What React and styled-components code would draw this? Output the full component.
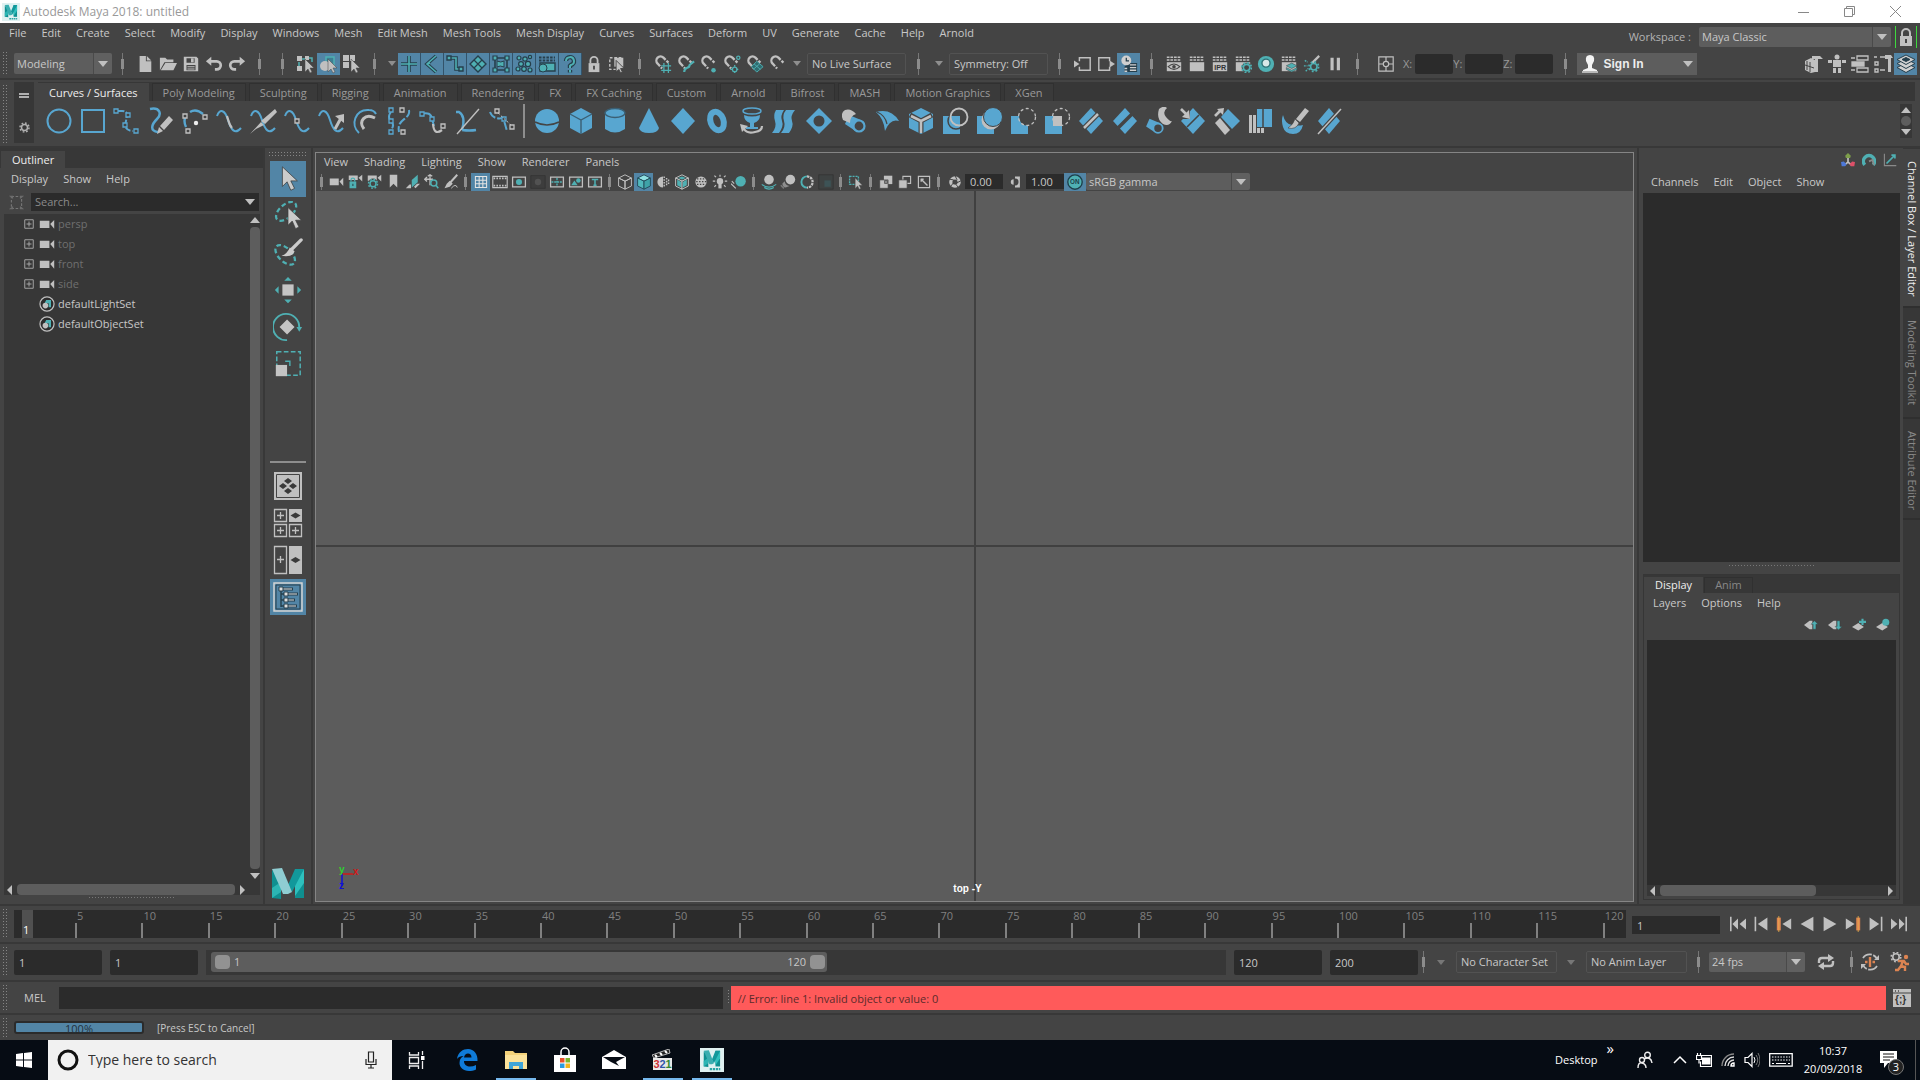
import React, { useState } from 'react'
import styled, { createGlobalStyle, css } from 'styled-components'

const G = '#c0c0c0'
const T = '#4fb0b3'
const B = '#58a6d0'
const D = '#263f4c'
const O = '#dd8452'

// small icons, 20 x 20 grid
const cursor = <path d="M9 5v13l3-3 2 4 2-1-2-4h4z" fill={G} stroke="#444" strokeWidth=".5" />
const magnet = <path d="M9 15L4 9.500a4.500 4.500 0 0 1 6.500-6.500L16 8.500" fill="none" stroke={G} strokeWidth="2.6" strokeDasharray="2 1.4 21.5 1.4 3" />
const clap = (
  <>
    <path d="M2 2.500h16M2 5.500h16" stroke={G} strokeWidth="1.6" strokeDasharray="3 1" />
    <path d="M2 8h16v10H2z" fill={G} />
  </>
)
const frame = <path d="M2 4h16v12H2z" fill="none" stroke={G} strokeWidth="1.6" />
const cube = (line, top, left, right) => (
  <g stroke={line} strokeWidth="1.2" strokeLinejoin="round">
    <path d="M10 1l8 4-8 4-8-4z" fill={top} />
    <path d="M2 5l8 4v10l-8-4z" fill={left} />
    <path d="M18 5l-8 4v10l8-4z" fill={right} />
  </g>
)
const gear = (c) => <g fill="none" stroke={c}><circle cx="10" cy="10" r="4" strokeWidth="2" /><circle cx="10" cy="10" r="6" strokeWidth="2" strokeDasharray="2.3 2.4" /></g>
const tag = <path d="M0 10l8-6h4v12H8z" fill={G} />

// selection mask icons are teal lines over a dark outline
const twoTone = (d) => (
  <>
    <path d={d} fill="none" stroke={D} strokeWidth="3.6" />
    <path d={d} fill="none" stroke={T} strokeWidth="1.6" />
  </>
)

const icons = {
  newFile: <path d="M4 1h7v6h6v12H4zM12 1l5 5h-5z" fill={G} />,
  open: <path d="M1 17V3h6l2 2h7v3H6zM7 9h13l-4 8H2z" fill={G} />,
  save: <path fillRule="evenodd" d="M2 2h14l2 2v14H2zM5 3.500v5h9v-5zM5 11v6h10v-6zM10 4h3v4h-3zM6 12.500h8v1H6zM6 15h8v1H6z" fill={G} />,
  undo: <path d="M1 7l6-5v3.500h6a5 5 0 0 1 0 12h-2v-3h2a2.500 2.500 0 0 0 0-6H7V12z" fill={G} />,
  redo: <path d="M19 7l-6-5v3.500H7a5 5 0 0 0 0 12h2v-3H7a2.500 2.500 0 0 1 0-6h6V12z" fill={G} />,
  selHier: <><path d="M1 2h5v5H1zM1 12h5v5H1zM9 2h4v4H9z" fill={G} /><path d="M3 8v4M6 5h3M13 4h3v4" stroke={T} fill="none" strokeWidth="1.5" />{cursor}</>,
  selObj: <><path d="M7 3h8v9H7z" fill="#3d7f93" stroke={T} strokeWidth="1.5" /><circle cx="6" cy="12" r="5" fill={G} />{cursor}</>,
  selComp: <><path d="M1 1h6v6H1zM8 1h5v6H8zM1 8h6v6H1z" fill={G} />{cursor}</>,
  mHandle: twoTone('M10 2v16M2 10h16'),
  mJoint: twoTone('M14 2L5 10l9 8M5 10l3-1'),
  mCurve: <>{twoTone('M4 4h7v11h5')}<path d="M2 2h4v4H2zM14 13h4v4h-4z" fill={T} stroke={D} strokeWidth="1.4" /></>,
  mSurf: <><path d="M10 2l8 8-8 8-8-8z" fill={T} stroke={D} strokeWidth="1.4" /><path d="M6 6l8 8M14 6l-8 8" stroke={D} strokeWidth="1.2" /></>,
  mDeform: <><path d="M4 4h12v12H4z" fill="none" stroke={D} strokeWidth="1.6" /><path d="M6 7q4 2 7 0v6q-4-2-7 0z" fill={T} stroke={D} /><path d="M2 2h4v4H2zM14 2h4v4h-4zM2 14h4v4H2zM14 14h4v4h-4z" fill={T} stroke={D} strokeWidth="1.2" /></>,
  mDyn: <g fill={T} stroke={D} strokeWidth="1.2"><circle cx="5" cy="4" r="2" /><circle cx="11" cy="5" r="2.2" /><circle cx="16" cy="3" r="1.6" /><circle cx="7" cy="10" r="2.4" /><circle cx="14" cy="10" r="2.6" /><circle cx="4" cy="15" r="2" /><circle cx="10" cy="15" r="2.3" /><circle cx="16" cy="16" r="2" /></g>,
  mRend: <><path d="M3 9h15v8H3z" fill={T} stroke={D} strokeWidth="1.4" /><path d="M2 3.500h16M2 6.500h16" stroke={D} strokeWidth="2" strokeDasharray="2.5 1.2" /><circle cx="6" cy="14" r="4" fill={T} stroke={D} /></>,
  mMisc: <><path d="M6 7a4 4 0 1 1 5 4l-1 1v2M10 16v2.500" fill="none" stroke={D} strokeWidth="4.4" /><path d="M6 7a4 4 0 1 1 5 4l-1 1v2M10 16v2.500" fill="none" stroke={T} strokeWidth="2" /></>,
  lock: <><path d="M6 9V6a4 4 0 0 1 8 0v3" fill="none" stroke={G} strokeWidth="2" /><path d="M4 9h12v10H4z" fill={G} /><path d="M10 12v4" stroke="#444" strokeWidth="2" /></>,
  selBox: <><path d="M2 3h12v13H2z" fill="none" stroke={G} strokeWidth="1.6" strokeDasharray="3 2" /><path d="M7 3h10v10H7z" fill={G} /><path d="M9 6v13l3-3 2 4 2-1-2-4h4z" fill={G} stroke="#444" strokeWidth="1" /></>,
  magGrid: <>{magnet}<path d="M11 9v11M16 9v11M8 12h11M8 17h11" stroke={T} strokeWidth="1.4" /></>,
  magCurve: <>{magnet}<path d="M8 19c0-7 6-3 6-8l5-4" fill="none" stroke={T} strokeWidth="2.4" /></>,
  magPoint: <>{magnet}<circle cx="15" cy="17" r="2.5" fill={T} /></>,
  magCenter: <>{magnet}<g fill="none" stroke={T} strokeWidth="1.4"><circle cx="17" cy="3" r="1.8" /><circle cx="13" cy="16" r="2.5" /><path d="M13 11v9M8 16h10" strokeDasharray="2 5" /></g></>,
  magPlane: <>{magnet}<path d="M12 7l7 6-7 6-6-6z" fill="#2f6c70" stroke={T} /><path d="M9 10l7 6M15 10l-7 6" stroke={T} /></>,
  magLive: magnet,
  inputs: <><path d="M6 7V3h12v14H6v-4" fill="none" stroke={G} strokeWidth="1.6" /><path d="M0 6v8l6-4z" fill={G} /></>,
  outputs: <><path d="M14 7V3H2v14h12v-4" fill="none" stroke={G} strokeWidth="1.6" /><path d="M14 6v8l6-4z" fill={G} /></>,
  history: <><path d="M9 9h10v10H5v-6" fill={D} /><path d="M11 11h7M11 14h7M5 15h3M5 18h3M11 17h7" stroke="#d0d0d0" strokeWidth="1.6" /><circle cx="7" cy="6" r="5.5" fill="#d0d0d0" /><path d="M7 3v3.500h3" stroke={D} strokeWidth="1.4" fill="none" /></>,
  renView: <>{clap}<path d="M3.500 13q6.500-6 13 0q-6.500 6-13 0z" fill="none" stroke="#444" strokeWidth="1.2" /><circle cx="10" cy="13" r="2" fill="#444" /></>,
  render: clap,
  ipr: <>{clap}<text x="3.5" y="16.5" fontSize="8" fontWeight="bold" fontFamily="Liberation Sans, sans-serif" fill="#333">IPR</text></>,
  renSet: <>{clap}<circle cx="14" cy="14" r="5.5" fill="#444" /><g transform="translate(5 5) scale(.9)">{gear(T)}</g></>,
  shader: <><circle cx="10" cy="10" r="9" fill={T} /><circle cx="10" cy="9" r="4.5" fill="#d8e8e8" stroke="#2c7074" strokeWidth="1.5" /></>,
  renLayer: <>{clap}<path d="M13 9l6 3-6 3-6-3zM7 14l6 3 6-3v2l-6 3-6-3z" fill={T} stroke="#444" strokeWidth=".6" /></>,
  lightEd: <><path d="M2 6l3 2M1 12h4M3 18l3-3" stroke={T} strokeWidth="1.5" strokeDasharray="2 1" /><path d="M18 1l-8 8" stroke={G} strokeWidth="2.5" /><g transform="translate(3 4) scale(.9)">{gear(T)}</g></>,
  pause: <path d="M5 3h3.500v14H5zM12 3h3.500v14H12z" fill={G} />,
  absMode: <g fill="none" stroke={G} strokeWidth="1.3"><path d="M2 2h16v16H2zM10 2v5M10 13v5M2 10h5M13 10h5" /><circle cx="10" cy="10" r="3" /></g>,
  build: <><path d="M1 7l6-3 4 2v12l-4 1-6-3z" fill={G} /><path d="M3 7v9M6 8v10M1 11l9 3" stroke="#444" /><path d="M8 2h8l3 3h-5v13h-3V5H8z" fill={G} /></>,
  rig: <g fill={G}><circle cx="10" cy="3" r="2.5" /><path d="M1 6h4v3H1zM15 6h4v3h-4zM6 6h8v7H6zM6 14h3v5H6zM11 14h3v5h-3z" /></g>,
  attrEd: <g fill="none" stroke={G} strokeWidth="1.3"><path d="M7 2h11v4H7zM7 14h11v4H7zM1 4h4M1 16h4" /><path d="M2 8h12v4H2z" fill={G} /></g>,
  toolSet: <g fill="none" stroke={G} strokeWidth="1.4"><path d="M1 3h3M7 3h5M2 8h3v3H2zM2 15h3v3H2zM7 16h5" /><path d="M12 1h6l2 3h-2v14h-3V5h-3z" fill={G} stroke="none" /></g>,
  layers: <g fill="#d0d0d0" stroke={D} strokeWidth="1"><path d="M10 9l9 4.500-9 5-9-5z" /><path d="M10 5l9 4.500-9 5-9-5z" /><path d="M10 1l9 4.500-9 5-9-5z" /><path d="M10 3.500l4 2-4 2-4-2z" fill={D} /></g>,
  // viewport panel bar
  cam: <path d="M1 6h12v9H1zM14 10l5-5v11z" fill={G} />,
  camLock: <><path d="M1 2h12v6H1zM14 5l5-4v9z" fill={G} /><path d="M2 10h9v9H2z" fill={T} /><path d="M4 10V8a2.500 2.500 0 0 1 5 0v2" fill="none" stroke={T} strokeWidth="1.6" /><path d="M6.500 13v3" stroke="#2d4d50" strokeWidth="1.5" /></>,
  camGear: <><path d="M1 2h12v7H1zM14 5l5-4v9z" fill={G} /><circle cx="8" cy="12" r="6" fill="#444" /><g transform="translate(-2 3)">{gear(T)}</g></>,
  bookmark: <path d="M5 1h10v17l-5-5-5 5z" fill={G} />,
  imgPlane: <><path d="M9 8l8-7v10l-8 7z" fill={T} /><path d="M1 19l5-5h2v5zM12 17l4-4h4l-6 6z" fill={G} /></>,
  pan2d: <><path d="M8 1v14M1 7h11M5 3l3-2 3 2M4 4L1 7l3 3" fill="none" stroke={G} strokeWidth="1.7" /><circle cx="13" cy="12" r="4" fill="#444" stroke={T} strokeWidth="2" /><path d="M16 15l3 4" stroke={T} strokeWidth="2" /></>,
  grease: <><path d="M19 1l-9 10" stroke={G} strokeWidth="2.6" /><path d="M9 9l4 4-4 4-7 2 3-6z" fill={G} /><path d="M11 19q6-7 8-1" stroke={G} fill="none" strokeWidth="1.3" /></>,
  grid: <path d="M3 3h14v14H3zM7.700 3v14M12.300 3v14M3 7.700h14M3 12.300h14" fill="none" stroke="#e4e4e4" strokeWidth="1.3" />,
  film: <><path d="M1 3h18v14H1z" fill="none" stroke={G} strokeWidth="1.4" /><path d="M2 5.500h16M2 14.500h16" stroke={G} strokeWidth="2" strokeDasharray="2 1.5" /></>,
  resGate: <>{frame}<circle cx="10" cy="10" r="3.8" fill={T} /></>,
  gateMask: <><path d="M1 2h18v16H1z" fill="#3d3d3d" stroke="#343434" /><circle cx="10" cy="10" r="4" fill="#525252" /></>,
  fieldChart: <>{frame}<path d="M10 5v10M3 10h14" stroke={T} strokeWidth="1.7" strokeDasharray="2.5 1" /></>,
  safeAct: <>{frame}<path d="M4 14l4-6 4 6z" fill={T} /><circle cx="13" cy="8" r="2.8" fill={T} /></>,
  safeTitle: <>{frame}<path d="M6 7h8M10 6.500v7.500M8 14h4" stroke={T} strokeWidth="1.9" /></>,
  wire: cube(G, 'none', 'none', 'none'),
  shaded: cube('#244c5c', '#8fe0e2', '#52b9bd', '#3fa3a8'),
  halfShade: <><path d="M10 3a7 7 0 0 0 0 14z" fill={G} /><path d="M11.500 3v14M14.500 5v10M17 7v6" stroke={G} strokeWidth="1.8" strokeDasharray="2 1.5" /></>,
  texCube: <>{cube(G, '#444', '#444', '#444')}<path d="M4 7l5 3v7l-5-3zM11 10l5-3v7l-5 3zM10 3l5 2-5 2-5-2z" fill={T} /></>,
  texture: <><circle cx="10" cy="10" r="7" fill={G} /><path d="M5 6h11M4 9.500h13M5 13h11" stroke="#444" strokeWidth="1.5" strokeDasharray="1.8 1.8" /></>,
  lights: <><circle cx="10" cy="9" r="4" fill={G} /><path d="M8 12h4v6H8z" fill={G} /><path d="M10 1v2.500M1 9h3M16 9h3M3 2l2 2M17 2l-2 2M3 16l2-2M17 16l-2-2" stroke={G} strokeWidth="1.5" /></>,
  shadows: <><circle cx="12" cy="9" r="6.5" fill={T} /><path d="M0 12l6 6M1 9l3 3" stroke={G} strokeWidth="1.4" /></>,
  ao: <><circle cx="10" cy="7" r="6" fill={G} /><path d="M1 13q9 7 18 0M4 17q6 4 12 0" stroke={T} fill="none" strokeWidth="1.5" /></>,
  blur: <><circle cx="13" cy="7" r="6" fill={G} /><path d="M6 9a6 6 0 0 0 6 6l-5 2a5 5 0 0 1-4-5z" fill="#8d8d8d" /><path d="M1 14l4 4" stroke="#777" strokeWidth="2" /></>,
  aa: <><path d="M10 3a7 7 0 0 0 0 14" fill="none" stroke={T} strokeWidth="2.4" /><path d="M10 3a7 7 0 0 1 0 14" fill="none" stroke={G} strokeWidth="2.8" strokeDasharray="3 1" /></>,
  dof: <><path d="M1 1h18v18H1z" fill="#3e4242" stroke="#343434" /><path d="M8 8h8v8H8z" fill="#3d5356" /></>,
  isolate: <><path d="M2 3h11v10H2z" fill="none" stroke={T} strokeWidth="1.7" strokeDasharray="2.5 1.2" />{cursor}</>,
  xray: <><path d="M7 1h12v12H7z" fill={G} /><path d="M1 7h12v12H1z" fill={G} stroke="#444" /><path d="M7.500 7.500h5v5h-5z" fill="#444" /><path d="M9 9h2v2H9z" fill={G} /></>,
  xrayAct: <><path d="M7 2h11v10H7z" fill="none" stroke={G} strokeWidth="1.6" /><path d="M1 7h12v12H1z" fill={G} stroke="#444" /></>,
  xrayJoint: <><path d="M2 2h16v16H2z" fill="none" stroke={G} strokeWidth="1.7" /><path d="M6 6l9 9M5.500 6h4M6 5.500v4" stroke={G} strokeWidth="2" /></>,
  exposure: <><circle cx="10" cy="10" r="6" fill="none" stroke={G} strokeWidth="4.6" /><path d="M10 1l3 6M19 8l-6 3M15 18l-4-5M4 16l4-5M2 6l6 1" stroke="#444" strokeWidth="1.4" /></>,
  gamma: <><path d="M10 2h7v16h-7v-3a5 5 0 0 0 0-10z" fill={G} /><path d="M8 6a4 4 0 0 0 0 8z" fill={G} /></>,
  cmOn: <><circle cx="10" cy="10" r="8" fill={T} stroke="#1d3f4a" strokeWidth="1.5" /><text x="4.5" y="12.5" fontSize="7" fontWeight="bold" fontFamily="Liberation Sans, sans-serif" fill="#1d3f4a">ON</text></>,
  // outliner
  plus: <path d="M1.500 1.500h17v17h-17zM10 5v10M5 10h10" fill="none" stroke="#a8a8a8" strokeWidth="1.9" />,
  set: <><circle cx="10" cy="10" r="8.8" fill="#2d2d2d" stroke={G} strokeWidth="1.5" /><path d="M9 5h6v9h-3V9H7z" fill={T} /><circle cx="8" cy="12" r="3.5" fill={G} /></>,
  filter: <><path d="M4 3h12v14H4z" fill="none" stroke="#777" strokeWidth="1.3" strokeDasharray="3 2" /><path d="M1 2h5v4zM19 2h-5v4zM1 18h5v-4zM19 18h-5v-4z" fill="#6c6c6c" /></>,
  // channel box
  manip: <><path d="M10 6v7l-5 4M10 13l5 4" stroke={G} strokeWidth="2.4" fill="none" /><path d="M10 0l4 4-1 3H7L6 4z" fill="#7d9e4a" /><path d="M0 13l4-1 4 4-2 3H1z" fill="#4d78d8" /><path d="M20 13l-4-1-4 4 2 3h5z" fill="#dd5068" /></>,
  speed: <><path d="M4 17a8 8 0 1 1 12 0" fill="none" stroke={T} strokeWidth="5" /><path d="M10 12l5-2 2 7" fill="none" stroke="#8a8a8a" strokeWidth="2.5" /></>,
  hyper: <><path d="M2 1v17h17" stroke="#8a8a8a" strokeWidth="1.6" fill="none" /><path d="M5 15L17 3M12 3h5v5" stroke={T} strokeWidth="2.4" fill="none" /></>,
  layUp: <>{tag}<path d="M15 4l5 5h-3v7h-4V9h-3z" fill={T} stroke="#333" strokeWidth=".5" /></>,
  layDown: <>{tag}<path d="M15 17l5-5h-3V4h-4v8h-3z" fill={T} stroke="#333" strokeWidth=".5" /></>,
  layNew: <><path d="M0 13l9-6 8 6-8 5z" fill={G} /><path d="M15 1v9M10 5.500h10" stroke={T} strokeWidth="3" /></>,
  laySel: <><path d="M0 13l9-6 8 6-8 5z" fill={G} /><circle cx="14" cy="6" r="5" fill={T} /></>,
  // playback
  toStart: <path d="M0 1h2v18H0zM10 3v14l-7-7zM20 3v14l-8-7z" fill={G} />,
  stepBack: <path d="M2 1h2v18H2zM18 2v16L6 10z" fill={G} />,
  keyBack: <><path d="M1 2h5v16H1z" fill={O} /><path d="M3.500 0v20" stroke="#e8b04a" strokeWidth="1" /><path d="M19 3v14L8 10z" fill={G} /></>,
  playBack: <path d="M18 1v18L2 10z" fill={G} />,
  play: <path d="M2 1v18l16-9z" fill={G} />,
  keyFwd: <><path d="M14 2h5v16h-5z" fill={O} /><path d="M16.500 0v20" stroke="#e8b04a" strokeWidth="1" /><path d="M1 3v14l11-7z" fill={G} /></>,
  stepFwd: <path d="M16 1h2v18h-2zM2 2v16l12-8z" fill={G} />,
  toEnd: <path d="M18 1h2v18h-2zM10 3v14l7-7zM0 3v14l8-7z" fill={G} />,
  loop: <><path d="M3 11V9q0-3 3-3h7M17 9v2q0 3-3 3H7" fill="none" stroke={G} strokeWidth="2.4" /><path d="M12 2l6 4-6 4zM8 10l-6 4 6 4z" fill={G} /></>,
  autoKey: <><path d="M3 6a8 8 0 0 1 14 1M17 14a8 8 0 0 1-14-1" fill="none" stroke={G} strokeWidth="1.8" strokeDasharray="10 1.5" /><path d="M19 3v5h-5zM1 17v-5h5z" fill={G} /><path d="M10 5v10M5 10h2.500M12.500 10H15" stroke={O} strokeWidth="2.4" /></>,
  runner: <><g transform="translate(-2 -3) scale(.8)">{gear(G)}</g><circle cx="16" cy="5" r="2.2" fill={O} /><path d="M8 9h6l2 3h3M13 9l-2 5 4 1v4M11 14l-3 4H5" stroke={O} strokeWidth="2.4" fill="none" /></>,
  script: <><path d="M1 1h18v18H1z" fill={G} /><path d="M1 5h18" stroke="#444" /><path d="M3 3h1M6 3h1" stroke="#444" strokeWidth="1.5" /><text x="3" y="15" fontSize="10" fontWeight="bold" fontFamily="Liberation Sans, sans-serif" fill="#333">{'{;}'}</text></>,
  shelfGear: gear('#b0b0b0'),
}

// shelf icons, 28 x 28 grid
const wave = 'M2 9C5 1 10 3 13 13s7 15 13 8'
const line = { fill: 'none', stroke: B, strokeWidth: 2 }
const gline = { fill: 'none', stroke: G, strokeWidth: 2.2 }
const square = (x, y, c = G) => <path key={x + '-' + y} d={`M${x - 2} ${y - 2}h4v4h-4z`} fill="#444" stroke={c} strokeWidth="1.3" />
const tube = <g><path d="M10 8l12 5-4 12-12-8z" fill={B} /><circle cx="20" cy="19" r="5.5" fill="#444" stroke={B} strokeWidth="2.2" /></g>
const patch = <path d="M14 1l12 13-12 13L2 14z" fill={B} />

const shelfA = [
  ['NURBS Circle', <circle cx="14" cy="14" r="11.5" {...line} />],
  ['NURBS Square', <path d="M3 3h22v22H3z" {...line} />],
  ['CV Curve', <><path d="M5 4h4q6 0 5 5l-2 10q2 5 8 5" {...line} strokeDasharray="6 2" />{square(3, 4, B)}{square(15, 8, B)}{square(12, 18, B)}{square(23, 24, B)}</>],
  ['Pencil Curve', <><path d="M3 2c10-2 12 5 7 10s-8 12 1 13" {...line} strokeWidth="2.5" /><path d="M22 9l4 4-9 10-4-4zM12 20l4 4-6 3z" fill={G} /></>],
  ['Three Point Arc', <><path d="M5 20q-3-6 0-12M9 5q6-4 13 2" {...line} strokeWidth="2.4" />{square(4, 9)}{square(24, 10)}{square(7, 24)}<circle cx="15" cy="16" r="2.2" fill="#eee" /></>],
  ['Attach Curves', <><path d={wave} {...line} /><path d="M12 9c2 6 2 9 5 12" {...gline} /></>],
  ['Detach Curves', <><path d={wave} {...line} /><path d="M26 2l2 3-12 12-4-3zM12 15l3 3-8 4-6 5z" fill={G} /></>],
  ['Insert Knot', <><path d={wave} {...line} />{square(14, 14)}</>],
  ['Extend Curve', <><path d={wave} {...line} /><path d="M18 22l6-11" {...gline} strokeWidth="3" /><path d="M18 9l9-2v9z" fill={G} /></>],
  ['Offset Curve', <><path d="M8 26C-1 18 4 2 18 3q5 0 7 4" {...line} /><path d="M13 22c-6-8 1-16 11-11" {...gline} strokeWidth="3" /></>],
  ['Rebuild Curve', <><path d="M6 5q-4 5 0 9t0 9M24 3c2 10-13 8-10 22" {...line} strokeDasharray="8 2" />{square(6, 3, B)}{square(6, 14, B)}{square(6, 25, B)}{square(17, 3)}{square(18, 25)}</>],
  ['Add Points', <><path d="M2 7q10-3 11 5l2 7" {...line} /><path d="M14 17q1 12 9 6" {...gline} />{square(3, 7, B)}{square(13, 12, B)}{square(24, 19)}</>],
  ['Curve Fillet', <><path d="M3 5h3q7 4 3 18M9 23q8 1 14 0" {...line} strokeWidth="2.4" /><path d="M26 2L4 27" stroke={G} strokeWidth="1.4" /></>],
  ['Edit Curve', <><path d="M3 5q3 8 13 6l2 6 2 7" {...line} strokeDasharray="8 2" />{square(10, 4)}{square(17, 12, B)}{square(25, 20)}<path d="M11 6l13 12" stroke={G} strokeDasharray="2 2" /></>],
]
const shelfB = [
  ['NURBS Sphere', <><circle cx="14" cy="14" r="12" fill={B} /><path d="M2 15q12 6 24 0" stroke="#444" fill="none" strokeWidth="1.5" /></>],
  ['NURBS Cube', <><path d="M14 1l11 6v14l-11 6-11-6V7z" fill={B} /><path d="M3 7l11 6 11-6M14 13v14" stroke="#3b5f73" strokeWidth="1.4" fill="none" /></>],
  ['NURBS Cylinder', <><path d="M4 6v16q10 7 20 0V6z" fill={B} /><ellipse cx="14" cy="6" rx="10" ry="4.5" fill={B} stroke="#3b5f73" strokeWidth="1.4" /></>],
  ['NURBS Cone', <path d="M14 1l10 20q-1 5-10 5T4 21z" fill={B} />],
  ['NURBS Plane', <path d="M14 1l12 13-12 13L2 14z" fill={B} />],
  ['NURBS Torus', <ellipse cx="14" cy="14" rx="6.5" ry="9.5" transform="rotate(-20 14 14)" fill="none" stroke={B} strokeWidth="6" />],
  ['Revolve', <><ellipse cx="15" cy="4" rx="9" ry="3" fill="none" stroke={B} strokeWidth="1.5" /><path d="M7 8q8 3 16 0q0 6-6 8v4h4v2H9v-2h4v-4Q7 14 7 8z" fill={B} /><path d="M7 22q3 5 11 3 7-1 7-6" {...gline} /><path d="M3 17l8 2-6 6z" fill={G} /></>],
  ['Loft', <g fill={B}><path d="M5 3h8q-4 6-2 11t-3 12H1q5-6 3-12T5 3z" /><path d="M15 3h9q-5 6-3 11t-3 12h-8q5-6 3-12t2-11z" /></g>],
  ['Planar', <><path d="M14 1l13 13-13 13L1 14z" fill={B} /><circle cx="14" cy="14" r="5.500" fill="#444" /></>],
  ['Extrude', <>{tube}<path d="M6 3q6-2 11 4-6 2-6 9l-7-3Q1 6 6 3z" fill={G} /></>],
  ['Birail', <><path d="M3 5q15-4 23 9-9-3-14 10Q11 12 3 5z" fill={B} /><path d="M4 5q8 3 10 12" stroke="#444" fill="none" strokeWidth="1.2" /></>],
  ['Bevel Plus', <><path d="M14 1l12 6v14l-12 6-12-6V7z" fill={B} /><path d="M3 8l11 6 11-6M14 14v12" stroke="#444" strokeWidth="5" fill="none" /><path d="M4 9l10 5 10-5M14 14v12" stroke={G} strokeWidth="2.6" fill="none" /></>],
  ['Project Curve', <><path d="M2 9h17v18H2z" fill={B} /><circle cx="15" cy="14" r="8" fill="none" stroke="#444" strokeWidth="1.5" /><circle cx="18" cy="10" r="8.5" fill="none" stroke={G} strokeWidth="1.8" /></>],
  ['Intersect Surfaces', <><path d="M2 9h17v18H2z" fill={B} /><circle cx="16" cy="13" r="9.500" fill={G} /><circle cx="18" cy="10" r="9.500" fill={B} stroke="#444" /></>],
  ['Trim Tool', <><path d="M2 9h8q0 9 9 10v8H2z" fill={B} /><circle cx="18" cy="10" r="8.500" fill="none" stroke={G} strokeWidth="1.3" strokeDasharray="3 2.5" /></>],
  ['Untrim Surfaces', <><path d="M2 9h8v10h9v8H2z" fill={B} /><path d="M10 9h9v10h-9z" fill={G} /><circle cx="18" cy="10" r="8.500" fill="none" stroke={G} strokeWidth="1.3" strokeDasharray="3 2.5" /></>],
  ['Attach Surfaces', <>{patch}<path d="M7 21L21 7" stroke="#444" strokeWidth="5" /><path d="M7 21L21 7" stroke={G} strokeWidth="2.5" /></>],
  ['Detach Surfaces', <>{patch}<path d="M6 22L22 6" stroke="#444" strokeWidth="3.5" /></>],
  ['Open/Close Surfaces', <><g transform="translate(-4 5) scale(.85)">{tube}</g><path d="M14 2q5-4 8-1-5 4-1 9t6 4q-3 6-9 3-7-5-4-15z" fill={G} /></>],
  ['Insert Isoparms', <>{patch}<path d="M8 20L20 8" stroke="#444" strokeWidth="1.6" /><path d="M0 0h11v12H0z" fill="#444" /><path d="M2 2l7 7" stroke={G} strokeWidth="2.6" /><path d="M11 12l-8-2 7-7z" fill={G} /></>],
  ['Extend Surfaces', <><path d="M15 2l12 12-8 8L8 10z" fill={B} /><path d="M2 16l5-5 10 12-5 5z" fill={G} /><path d="M2 9l6-6" stroke={G} strokeWidth="2.6" /><path d="M11 1L4 2l6 6z" fill={G} /></>],
  ['Offset Surfaces', <><path d="M10 2h15v18H10z" fill={B} /><path d="M16 2v18" stroke="#444" strokeWidth="1.5" /><path d="M2 8h3v18H2zM6 8h3v18H6zM10 21h3v5h-3zM14 21h3v5h-3z" fill={G} /></>],
  ['Sculpt Geometry', <><path d="M2 8q2 9 9 10t11 0q-2 9-10 9T2 20 2 8z" fill={B} /><path d="M24 1l4 3-9 11-4-3z" fill={G} /><path d="M14 12l4 4q-3 7-11 5 5-3 7-9z" fill={G} stroke="#444" strokeWidth=".6" /></>],
  ['Rebuild Surfaces', <><path d="M14 1l11 13-11 13L3 14z" fill={B} /><path d="M26 2L3 27" stroke="#444" strokeWidth="4" /><path d="M26 2L3 27" stroke={G} strokeWidth="1.5" /></>],
]

// toolbox icons, 32 x 32 grid
const bigCursor = <path d="M0 0v21l5-5 4 9 4-2-4-8h7z" fill="#cbcbcb" stroke="#3a3a3a" strokeWidth=".8" />
const tools = [
  ['Select Tool', <g transform="translate(10 3)">{bigCursor}</g>],
  ['Lasso Tool', <><ellipse cx="14" cy="11" rx="13" ry="7" transform="rotate(-42 14 11)" fill="none" stroke={T} strokeWidth="2.4" strokeDasharray="5 3" /><g transform="translate(16 7) scale(.9)">{bigCursor}</g></>],
  ['Paint Selection Tool', <><ellipse cx="13" cy="18" rx="13" ry="7" transform="rotate(45 13 18)" fill="none" stroke={T} strokeWidth="2.4" strokeDasharray="5 3" /><path d="M30 2l-10 10" stroke="#cbcbcb" strokeWidth="3.5" strokeLinecap="round" /><path d="M18 10l5 4q-2 7-14 5 6-2 9-9z" fill="#cbcbcb" /></>],
  ['Move Tool', <><path d="M10 10h12v12H10z" fill="#c4c4c4" /><path d="M16 2l4 4h-8zM16 30l4-4h-8zM2 16l4-4v8zM30 16l-4-4v8z" fill={T} /></>],
  ['Rotate Tool', <><path d="M15 30a14 14 0 1 1 13-14" fill="none" stroke={T} strokeWidth="2" /><path d="M25 16h6l-3 5z" fill={T} /><path d="M15 8l8 8-8 8-8-8z" fill="#c4c4c4" /></>],
  ['Scale Tool', <><path d="M4 3h25v25H4z" fill="none" stroke={T} strokeWidth="1.6" strokeDasharray="5 2.5" /><path d="M13 13h5v5" fill="none" stroke={T} strokeWidth="1.5" /><path d="M3 17h12v12H3z" fill="#c4c4c4" /></>],
]
const layoutIcons = [
  ['Single Perspective View', <><path d="M2 2h28v28H2z" fill={G} /><path d="M4.500 4.500h23v23h-23z" fill="none" stroke="#444" strokeWidth="1" /><path d="M16 8l4 3-4 3-4-3zM16 18l4 3-4 3-4-3zM11 13l4 3-4 3-4-3zM21 13l4 3-4 3-4-3z" fill="#3a3a3a" /></>],
  ['Four View', <><path d="M17 2h13v13H17z" fill={G} /><path d="M23.500 5.500l5 3-5 3-5-3z" fill="#3a3a3a" /><path d="M2.500 2.500h12v12h-12zM2.500 17.500h12v12h-12zM17.500 17.500h12v12h-12zM8.500 5v7M5 8.500h7M8.500 20v7M5 23.500h7M23.500 20v7M20 23.500h7" fill="none" stroke={G} strokeWidth="1.3" /></>],
  ['Two Panes Side by Side', <><path d="M17 2h13v28H17z" fill={G} /><path d="M23.500 13l5 3-5 3-5-3z" fill="#3a3a3a" /><path d="M2.500 2.500h12v27h-12zM8.500 12v7M5 15.500h7" fill="none" stroke={G} strokeWidth="1.3" /></>],
  ['Persp/Outliner', <><path d="M2 2h28v28H2z" fill="none" stroke="#d5d5d5" strokeWidth="1.5" /><path d="M4 4h24v24H4z" fill="none" stroke={D} strokeWidth="1" /><path d="M9 8v18M9 13h5M9 19h5M9 25h5" stroke={D} strokeWidth="1.4" /><path d="M9 8h12M14 13h12M14 19h9M14 25h11" stroke={D} strokeWidth="3" /><path d="M10 8h10M15 13h10M15 19h7M15 25h9" stroke="#ddd" strokeWidth="1.2" /><path d="M7 6h4v4H7zM12 11h4v4h-4zM12 17h4v4h-4zM12 23h4v4h-4z" fill="#ddd" stroke={D} /></>],
]

function Icon({ name, size = 20 }) {
  return <svg width={size} height={size} viewBox="0 0 20 20" aria-hidden="true">{icons[name]}</svg>
}

const MayaLogo = ({ size = 32, tile = false }) => (
  <svg width={size} height={size} viewBox="0 0 32 32" aria-hidden="true">
    {tile && <path d="M0 0h32v32H0z" fill="#dff1f1" />}
    <g transform={tile ? 'translate(5 3) scale(.68 .72)' : ''}>
      <path d="M0 2v28l9 1V12z" fill="#0f8f90" />
      <path d="M9 14v10l-9 6V20z" fill="#2bb5b3" />
      <path d="M23 1h9v29h-9z" fill="#0f8f90" />
      <path d="M32 1v14L23 28V14z" fill="#2ec0bd" />
      <path d="M23 1h9L20 24l-4-7z" fill="#12989b" />
      <path d="M0 1l10-1 10 24-4 2h-5z" fill={tile ? '#3aaeb0' : '#8fcdd2'} />
    </g>
    {tile && <path d="M13 28h14" stroke="#2aa5a5" strokeWidth="3" strokeDasharray="3 1" />}
  </svg>
)

const menus = ['File', 'Edit', 'Create', 'Select', 'Modify', 'Display', 'Windows', 'Mesh', 'Edit Mesh', 'Mesh Tools', 'Mesh Display', 'Curves', 'Surfaces', 'Deform', 'UV', 'Generate', 'Cache', 'Help', 'Arnold']
const shelfTabs = ['Curves / Surfaces', 'Poly Modeling', 'Sculpting', 'Rigging', 'Animation', 'Rendering', 'FX', 'FX Caching', 'Custom', 'Arnold', 'Bifrost', 'MASH', 'Motion Graphics', 'XGen']
const masks = ['mHandle', 'mJoint', 'mCurve', 'mSurf', 'mDeform', 'mDyn', 'mRend', 'mMisc']
const ticks = Array.from({ length: 24 }, (_, i) => (i + 1) * 5)

function Buttons({ names, w, size, active }) {
  return names.map((n) => (
    <ToolButton key={n} type="button" aria-label={n} $w={w} $on={n === active}>
      <Icon name={n} size={size} />
    </ToolButton>
  ))
}

const ShelfGroup = ({ items }) => items.map(([name, drawing]) => (
  <ShelfButton key={name} type="button" aria-label={name}>
    <svg width="28" height="28" viewBox="0 0 28 28">{drawing}</svg>
  </ShelfButton>
))

const Sep = ({ w = 23 }) => <SepCell $w={w}><i /></SepCell>

function Combo({ label, options, w, h = 20 }) {
  return (
    <ComboBox $w={w} $h={h}>
      <select aria-label={label}>{options.map((o) => <option key={o}>{o}</option>)}</select>
      <Arrow />
    </ComboBox>
  )
}

const Menu = ({ items }) => items.map((m) => <MenuItem key={m} type="button">{m}</MenuItem>)

const App = () => {
  const [tab, setTab] = useState('Curves / Surfaces')
  const [tool, setTool] = useState('Select Tool')

  return (
    <Page>
      <Global />
      <TitleBar>
        <MayaLogo size={18} tile />
        <h1>Autodesk Maya 2018: untitled</h1>
        <WinButton type="button" aria-label="Minimize"><svg width="11" height="11"><path d="M0 6.500h11" stroke="#888" /></svg></WinButton>
        <WinButton type="button" aria-label="Restore"><svg width="11" height="11"><path d="M.5 2.500h8v8h-8zM2.500 2.500v-2h8v8h-2" fill="none" stroke="#888" /></svg></WinButton>
        <WinButton type="button" aria-label="Close"><svg width="11" height="11"><path d="M0 0l11 11M11 0L0 11" stroke="#888" /></svg></WinButton>
      </TitleBar>

      <MenuBar>
        <MenuList><Menu items={menus} /></MenuList>
        <Workspace>
          <span>Workspace :</span>
          <Combo label="Workspace" options={['Maya Classic']} w={192} />
          <LockButton type="button" aria-label="Lock workspace"><Icon name="lock" /></LockButton>
        </Workspace>
      </MenuBar>

      <StatusLine>
        <Grip />
        <Combo label="Menu set" options={['Modeling']} w={98} h={21} />
        <Sep w={21} />
        <Buttons names={['newFile', 'open', 'save', 'undo', 'redo']} w={23} size={18} />
        <Sep />
        <Sep />
        <Buttons names={['selHier', 'selObj', 'selComp']} w={23} active="selObj" />
        <Sep />
        <SmallArrow type="button" aria-label="Selection masks" $w={12} />
        <MaskGroup>
          {masks.map((n) => <MaskButton key={n} type="button" aria-label={n}><Icon name={n} /></MaskButton>)}
        </MaskGroup>
        <Buttons names={['lock', 'selBox']} w={23} size={18} />
        <Sep />
        <Buttons names={['magGrid', 'magCurve', 'magPoint', 'magCenter', 'magPlane', 'magLive']} w={23} size={18} />
        <SmallArrow type="button" aria-label="Live surface menu" $w={16} />
        <OutlineField type="button">No Live Surface</OutlineField>
        <Sep w={25} />
        <SmallArrow type="button" aria-label="Symmetry menu" $w={16} />
        <OutlineField type="button">Symmetry: Off</OutlineField>
        <Sep w={23} />
        <Buttons names={['inputs', 'outputs', 'history']} w={23} size={18} active="history" />
        <Sep w={22} />
        <Buttons names={['renView', 'render', 'ipr', 'renSet', 'shader', 'renLayer', 'lightEd', 'pause']} w={23} size={18} />
        <Sep />
        <ToolButton type="button" aria-label="Absolute transform" $w={34}><Icon name="absMode" size={18} /></ToolButton>
        {['X', 'Y', 'Z'].map((a) => (
          <AxisField key={a}>{a}:<input aria-label={a + ' value'} /></AxisField>
        ))}
        <Sep w={24} />
        <SignIn type="button">
          <svg width="20" height="20" viewBox="0 0 20 20"><path d="M10 1q5 0 4 6l-2 4v3l5 2v2H3v-2l5-2v-3L6 7q-1-6 4-6z" fill="#f4f4f4" /><path d="M2 18h16" stroke="#b9b9b9" strokeWidth="2" /></svg>
          <span>Sign In</span>
          <Arrow />
        </SignIn>
        <Spacer />
        <Buttons names={['build', 'rig', 'attrEd', 'toolSet', 'layers']} w={23} active="layers" />
      </StatusLine>

      <Shelf>
        <Grip />
        <ShelfSide>
          <button type="button" aria-label="Shelf menu"><Bars /></button>
          <button type="button" aria-label="Shelf options"><Icon name="shelfGear" size={15} /></button>
        </ShelfSide>
        <ShelfMain>
          <ShelfTabs role="tablist">
            {shelfTabs.map((t) => (
              <ShelfTab key={t} type="button" role="tab" aria-selected={t === tab} $on={t === tab} onClick={() => setTab(t)}>{t}</ShelfTab>
            ))}
          </ShelfTabs>
          <ShelfRow>
            <ShelfGroup items={shelfA} />
            <ShelfSep />
            <ShelfGroup items={shelfB} />
            <Spacer />
            <ShelfScroll><Arrow $dir="up" /><b /><Arrow /></ShelfScroll>
          </ShelfRow>
        </ShelfMain>
      </Shelf>

      <Body>
        <Outliner>
          <TabStrip><Tab type="button" $on>Outliner</Tab></TabStrip>
          <PanelMenu><Menu items={['Display', 'Show', 'Help']} /></PanelMenu>
          <SearchRow>
            <Icon name="filter" size={17} />
            <label><input placeholder="Search..." aria-label="Search outliner" /><Arrow /></label>
          </SearchRow>
          <TreeArea>
            <Tree>
              {['persp', 'top', 'front', 'side'].map((n) => (
                <li key={n}>
                  <button type="button" aria-label={'Expand ' + n}><Icon name="plus" size={10} /></button>
                  <Icon name="cam" size={16} /><Dim>{n}</Dim>
                </li>
              ))}
              {['defaultLightSet', 'defaultObjectSet'].map((n) => (
                <li key={n}><TreeGap /><Icon name="set" size={16} /><span>{n}</span></li>
              ))}
            </Tree>
            <VScroll><Arrow $dir="up" /><Thumb /><Arrow /></VScroll>
          </TreeArea>
          <HScroll><Arrow $dir="left" /><Thumb /><Arrow $dir="right" /></HScroll>
          <DotLine />
        </Outliner>

        <Toolbox>
          <DotGrip />
          {tools.map(([n, g]) => (
            <BigTool key={n} type="button" aria-label={n} $on={n === tool} onClick={() => setTool(n)}><svg width="30" height="30" viewBox="0 0 32 32">{g}</svg></BigTool>
          ))}
          <ToolRule />
          {layoutIcons.map(([n, g]) => (
            <BigTool key={n} type="button" aria-label={n} $on={n === 'Persp/Outliner'}><svg width="32" height="32" viewBox="0 0 32 32">{g}</svg></BigTool>
          ))}
          <Spacer />
          <MayaLogo size={32} />
        </Toolbox>

        <Viewport>
          <PanelMenu $view><Menu items={['View', 'Shading', 'Lighting', 'Show', 'Renderer', 'Panels']} /></PanelMenu>
          <PanelBar>
            <Sep w={11} />
            <Buttons names={['cam', 'camLock', 'camGear', 'bookmark', 'imgPlane', 'pan2d', 'grease']} w={19} size={15} />
            <Sep w={11} />
            <Buttons names={['grid', 'film', 'resGate', 'gateMask', 'fieldChart', 'safeAct', 'safeTitle']} w={19} size={16} active="grid" />
            <Sep w={11} />
            <Buttons names={['wire', 'shaded', 'halfShade', 'texCube', 'texture', 'lights', 'shadows']} w={19} size={16} active="shaded" />
            <Sep w={11} />
            <Buttons names={['ao', 'blur', 'aa', 'dof']} w={19} size={16} />
            <Sep w={11} />
            <Buttons names={['isolate']} w={19} size={16} />
            <Sep w={11} />
            <Buttons names={['xray', 'xrayAct', 'xrayJoint']} w={19} size={14} />
            <Sep w={11} />
            <Buttons names={['exposure']} w={21} size={14} />
            <MiniInput aria-label="Exposure" defaultValue="0.00" />
            <Buttons names={['gamma']} w={23} size={14} />
            <MiniInput aria-label="Gamma" defaultValue="1.00" />
            <Buttons names={['cmOn']} w={22} size={18} active="cmOn" />
            <Combo label="View transform" options={['sRGB gamma']} w={164} h={17} />
          </PanelBar>
          <Scene>
            <AxisGizmo>
              <svg width="34" height="34" viewBox="0 0 34 34">
                <path d="M9 14h11" stroke="#d01818" strokeWidth="1.5" />
                <path d="M9 14v12" stroke="#1010d8" strokeWidth="1.5" />
                <g fontSize="10" fontWeight="bold" fontFamily="Liberation Sans, sans-serif">
                  <text x="6" y="13" fill="#30d030">y</text>
                  <text x="20" y="15" fill="#d01818">x</text>
                  <text x="6" y="29" fill="#1010d8">z</text>
                </g>
              </svg>
            </AxisGizmo>
            <CameraName>top -Y</CameraName>
          </Scene>
        </Viewport>

        <RightPanel>
          <ChannelIcons><Buttons names={['manip', 'speed', 'hyper']} w={21} size={14} /></ChannelIcons>
          <PanelMenu $right><Menu items={['Channels', 'Edit', 'Object', 'Show']} /></PanelMenu>
          <DarkBox $grow={370} />
          <DotLine $wide />
          <LayerFrame>
            <TabStrip $low><Tab type="button" $on>Display</Tab><Tab type="button">Anim</Tab></TabStrip>
            <PanelMenu $layer><Menu items={['Layers', 'Options', 'Help']} /></PanelMenu>
            <LayerIcons><Buttons names={['layUp', 'layDown', 'layNew', 'laySel']} w={24} size={14} /></LayerIcons>
            <DarkBox $inner />
            <HScroll $layer><Arrow $dir="left" /><Thumb $part /><Arrow $dir="right" /></HScroll>
          </LayerFrame>
        </RightPanel>

        <SideTabs>
          <SideTab type="button" $on $h={159}>Channel Box / Layer Editor</SideTab>
          <SideTab type="button" $h={111}>Modeling Toolkit</SideTab>
          <SideTab type="button" $h={101}>Attribute Editor</SideTab>
        </SideTabs>
      </Body>

      <TimeRow>
        <Grip />
        <Track>
          <Now>1</Now>
          <Ticks>{ticks.map((t) => <Tick key={t}><span>{t}</span><i /></Tick>)}</Ticks>
        </Track>
        <FrameInput aria-label="Current frame" defaultValue="1" />
        <Playback><Buttons names={['toStart', 'stepBack', 'keyBack', 'playBack', 'play', 'keyFwd', 'stepFwd', 'toEnd']} w={23} size={16} /></Playback>
      </TimeRow>

      <RangeRow>
        <Grip />
        <RangeInput aria-label="Animation start" defaultValue="1" />
        <RangeInput aria-label="Playback start" defaultValue="1" />
        <RangeTrack>
          <RangeBar><b /><span>1</span><Spacer /><span>120</span><b /></RangeBar>
        </RangeTrack>
        <RangeInput aria-label="Playback end" defaultValue="120" />
        <RangeInput aria-label="Animation end" defaultValue="200" />
        <Tail>
          <Sep w={10} />
          <SmallArrow type="button" aria-label="Character set menu" $w={26} $hollow />
          <OutlineField type="button" $w={101}>No Character Set</OutlineField>
          <SmallArrow type="button" aria-label="Anim layer menu" $w={27} $hollow />
          <OutlineField type="button" $w={101}>No Anim Layer</OutlineField>
          <Sep w={22} />
          <Combo label="Frame rate" options={['24 fps']} w={96} />
          <Buttons names={['loop']} w={42} />
          <Sep w={8} />
          <Buttons names={['autoKey', 'runner']} w={30} />
        </Tail>
      </RangeRow>

      <CommandRow>
        <Grip />
        <label htmlFor="mel">MEL</label>
        <CommandInput id="mel" />
        <Grip $thin />
        <ErrorBox>// Error: line 1: Invalid object or value: 0</ErrorBox>
        <Buttons names={['script']} w={32} />
      </CommandRow>

      <HelpRow>
        <Grip />
        <Progress role="progressbar" aria-valuenow={100}>100%</Progress>
        <span>[Press ESC to Cancel]</span>
      </HelpRow>

      <Taskbar>
        <TaskButton type="button" aria-label="Start"><svg width="16" height="16" viewBox="0 0 16 16"><path d="M0 2l7-1v6.500H0zM8 1l8-1v7.500H8zM0 8.500h7V15l-7-1zM8 8.500h8V16l-8-1z" fill="#fff" /></svg></TaskButton>
        <TaskSearch>
          <svg width="22" height="22"><circle cx="11" cy="11" r="9" fill="none" stroke="#111" strokeWidth="3" /></svg>
          <input placeholder="Type here to search" aria-label="Type here to search" />
          <svg width="12" height="18" viewBox="0 0 12 18"><path d="M3.500 1h5v10h-5zM1 8v5.500h10V8M6 13.500V17M3 17h6" fill="none" stroke="#222" strokeWidth="1.2" /></svg>
        </TaskSearch>
        <TaskButton type="button" aria-label="Task View" $w={50}><svg width="18" height="18"><path d="M1.500 1v3h9V1M1.500 6.500h9v6h-9zM1.500 18v-3h9v3M14.500 0v4M14.500 10v8" fill="none" stroke="#eee" strokeWidth="1.3" /><path d="M13 5h3.500v4H13z" fill="#fff" /></svg></TaskButton>
        <TaskButton type="button" aria-label="Edge" $w={49}><svg width="22" height="22" viewBox="0 0 22 22"><path d="M1 10C2 3 7 0 12 0c6 0 10 5 9.500 12H8c0 4 3 5.500 6 5.500 2 0 4-.5 6-1.500v4.500c-2 1-5 1.500-7 1.500-6 0-9.500-4-9.500-8 0-4 2-6 4-7-1.500 0-4 0-6.500 3zM8 8.500h7.500C15.500 6 14 4.500 12 4.500S8.500 6 8 8.500z" fill="#0f7bd8" /></svg></TaskButton>
        <TaskButton type="button" aria-label="File Explorer" $w={49} $run><svg width="22" height="20" viewBox="0 0 22 20"><path d="M0 1h8l2 2h12v16H0z" fill="#f3d27a" /><path d="M0 5h22v14H0z" fill="#fbe29a" /><path d="M4 19v-7h14v7h-4v-3H8v3z" fill="#3fa5d8" /></svg></TaskButton>
        <TaskButton type="button" aria-label="Store" $w={49}><svg width="24" height="26" viewBox="0 0 24 26"><path d="M1 8h22v17H1z" fill="#fff" /><path d="M8 8V5a4 4 0 0 1 8 0v3" stroke="#fff" strokeWidth="1.5" fill="none" /><path d="M7 11h4.500v4.500H7z" fill="#e8502a" /><path d="M12.500 11H17v4.500h-4.500z" fill="#7cb52c" /><path d="M7 16.500h4.500V21H7z" fill="#2a9be0" /><path d="M12.500 16.500H17V21h-4.500z" fill="#f2b51c" /></svg></TaskButton>
        <TaskButton type="button" aria-label="Mail" $w={49}><svg width="24" height="20" viewBox="0 0 24 20"><path d="M0 7l12-7 12 7v12H0z" fill="#fff" /><path d="M1 7h22l-9 5 3 4-8-4z" fill="#070c14" /></svg></TaskButton>
        <TaskButton type="button" aria-label="Media Player Classic" $w={49} $run><svg width="22" height="22" viewBox="0 0 22 22"><path d="M0 6l17-6 1 4L2 9z" fill="#222" stroke="#ddd" strokeWidth=".8" /><path d="M3 6l2 2M8 4l2 2M13 2l2 2" stroke="#fff" strokeWidth="2" /><path d="M1 9h19v12H1z" fill="#e9e9e9" /><g fontSize="11" fontWeight="bold" fontFamily="Liberation Sans, sans-serif"><text x="1.5" y="19" fill="#c33">3</text><text x="7.5" y="19" fill="#35a">2</text><text x="13.5" y="19" fill="#383">1</text></g></svg></TaskButton>
        <TaskButton type="button" aria-label="Maya" $w={49} $run><MayaLogo size={24} tile /></TaskButton>
        <Spacer />
        <Tray>
          <Desk>Desktop</Desk>
          <Chevrons>»</Chevrons>
          <People><svg width="16" height="18" viewBox="0 0 16 18"><g fill="none" stroke="#eee" strokeWidth="1.4"><circle cx="10.5" cy="4" r="2.8" /><circle cx="5" cy="9" r="2.5" /><path d="M7 8q7-3 8 4M1 17q0-6 4-5t4 5" /></g></svg></People>
          <svg width="14" height="10" viewBox="0 0 14 10"><path d="M1 8l6-6 6 6" fill="none" stroke="#fff" strokeWidth="1.5" /></svg>
          <svg width="16" height="14" viewBox="0 0 16 14"><path d="M6 4.500h8.500v7H6z" fill="#fff" /><path d="M5 2.500h10.500v11H4.500v-5M1.500 0v2M4.500 0v2M.5 2.500h5v4h-5zM3 6.500v4" stroke="#fff" fill="none" strokeWidth="1.2" /></svg>
          <svg width="14" height="14" viewBox="0 0 14 14"><g fill="none" strokeWidth="1.4"><path d="M1 13A12 12 0 0 1 13 1" stroke="#888" /><path d="M4 13a9 9 0 0 1 9-9M7 13a6 6 0 0 1 6-6" stroke="#ddd" /><path d="M10 13a3 3 0 0 1 3-3v3z" stroke="#fff" /></g></svg>
          <svg width="16" height="16" viewBox="0 0 16 16"><path d="M1 5.500h3l4-4v13l-4-4H1z" fill="none" stroke="#fff" strokeWidth="1.2" /><path d="M10 5q2 3 0 6" stroke="#fff" fill="none" /><path d="M12 3q3.500 5 0 10M14 1q4 7 0 14" stroke="#777" fill="none" /></svg>
          <svg width="24" height="14" viewBox="0 0 24 14"><path d="M.7.7h22.500v12.500H.7z" fill="none" stroke="#fff" strokeWidth="1.3" /><path d="M3 4h18M3 7h18" stroke="#fff" strokeDasharray="1.5 1.3" /><path d="M3 10.500h2M7 10.500h10M19 10.500h2" stroke="#fff" /></svg>
          <Clock><time>10:37</time><time>20/09/2018</time></Clock>
          <Notify type="button" aria-label="3 new notifications">
            <svg width="18" height="18" viewBox="0 0 18 18"><path d="M0 0h17v12H8l-4 5v-5H0z" fill="#fff" /><path d="M3 3h11M3 6h11M3 9h7" stroke="#111" /></svg>
            <Badge>3</Badge>
          </Notify>
        </Tray>
      </Taskbar>
    </Page>
  )
}

export default App

const Global = createGlobalStyle`
  * { box-sizing: border-box; }
  body { margin: 0; background: #444; }
  button, input, select { font: inherit; color: inherit; border: 0; margin: 0; padding: 0; background: none; border-radius: 0; outline: 0; }
  svg { display: block; flex: none; }
`

const Page = styled.div`
  display: flex;
  flex-direction: column;
  min-height: 100vh;
  background: #444;
  color: #c8c8c8;
  font: 11px/16px "Open Sans", "Noto Sans", sans-serif;
  white-space: nowrap;
`

const TitleBar = styled.header`
  display: flex;
  align-items: center;
  height: 23px;
  padding: 0 2px;
  background: #fff;
  color: #999;
  h1 { flex: 1; margin: 0 0 0 3px; font-size: 12px; font-weight: 400; }
`

const WinButton = styled.button`
  display: flex;
  align-items: center;
  justify-content: center;
  width: 46px;
  height: 20px;
`

const MenuBar = styled.nav`
  display: flex;
  justify-content: space-between;
  height: 26px;
  padding: 2px 3px 0 9px;
`

const MenuList = styled.div`
  display: flex;
  gap: 15px;
  height: 16px;
`

const MenuItem = styled.button`
  height: 16px;
`

const Workspace = styled.div`
  display: flex;
  align-items: center;
  gap: 4px;
  height: 24px;
  > span { margin-right: 4px; color: #b4b4b4; }
`

const LockButton = styled.button`
  width: 22px;
  height: 22px;
  border: solid #3ed83e;
  border-width: 0 1px;
`

const Arrow = styled.i`
  flex: none;
  width: 0;
  height: 0;
  border: 5px solid transparent;
  ${(p) => p.$dir === 'up' && css`border-width: 0 5px 6px; border-bottom-color: #c0c0c0;`}
  ${(p) => p.$dir === 'left' && css`border-width: 5px 5px 5px 0; border-right-color: #c0c0c0;`}
  ${(p) => p.$dir === 'right' && css`border-width: 5px 0 5px 5px; border-left-color: #c0c0c0;`}
  ${(p) => !p.$dir && css`border-width: 6px 5px 0; border-top-color: #c0c0c0;`}
`

const ComboBox = styled.div`
  display: grid;
  grid-template-columns: 1fr 19px;
  align-items: center;
  justify-items: center;
  width: ${(p) => p.$w}px;
  height: ${(p) => p.$h}px;
  background: linear-gradient(to left, #606060 18px, #4a4a4a 18px, #4a4a4a 19px, #5d5d5d 19px);
  border-radius: 2px;
  select { grid-area: 1 / 1 / 2 / 3; width: 100%; height: 100%; padding-left: 3px; appearance: none; }
  ${Arrow} { grid-area: 1 / 2; pointer-events: none; }
`

const dots = css`
  background: conic-gradient(from 270deg at 1px 1px, #858585 90deg, transparent 0) 0 0 / 3px 3px;
`

const Grip = styled.div`
  flex: none;
  align-self: stretch;
  width: ${(p) => (p.$thin ? 3 : 5)}px;
  margin: ${(p) => (p.$thin ? '8px 0 8px 5px' : '3px 6px 3px 3px')};
  ${dots}
`

const StatusLine = styled.div`
  display: flex;
  align-items: center;
  height: 31px;
  padding-right: 3px;
  border-bottom: 2px solid #383838;
`

const SepCell = styled.span`
  display: flex;
  justify-content: center;
  flex: none;
  width: ${(p) => p.$w}px;
  i {
    width: 3px;
    height: 22px;
    background: linear-gradient(#8c8c8c, #8c8c8c) 50% 50% / 3px 10px no-repeat, linear-gradient(#777, #777) 50% 0 / 1px 100% no-repeat;
  }
`

const ToolButton = styled.button`
  display: flex;
  align-items: center;
  justify-content: center;
  flex: none;
  width: ${(p) => p.$w}px;
  height: ${(p) => (p.$w < 23 ? 18 : 22)}px;
  background: ${(p) => (p.$on ? '#5285a6' : 'none')};
`

const SmallArrow = styled.button`
  flex: none;
  width: ${(p) => p.$w}px;
  height: 20px;
  &::before {
    content: '';
    display: block;
    width: 0;
    margin: 0 auto;
    border: solid transparent;
    border-width: 5px 4px 0;
    border-top-color: ${(p) => (p.$hollow ? '#777' : '#8e8e8e')};
  }
`

const MaskGroup = styled.div`
  display: flex;
`

const MaskButton = styled.button`
  display: flex;
  align-items: center;
  justify-content: center;
  width: 23px;
  height: 22px;
  background: #5285a6;
  border-right: 1px solid #33536a;
`

const OutlineField = styled.button`
  flex: none;
  width: ${(p) => p.$w || 99}px;
  height: 22px;
  margin-left: 2px;
  padding-left: 4px;
  text-align: left;
  border: 1px solid #525252;
  border-radius: 2px;
`

const AxisField = styled.label`
  display: flex;
  align-items: center;
  gap: 3px;
  color: #9a9a9a;
  input { width: 38px; height: 20px; background: #2b2b2b; border-radius: 2px; }
`

const SignIn = styled.button`
  display: flex;
  align-items: center;
  gap: 3px;
  width: 120px;
  height: 22px;
  padding: 0 4px 0 3px;
  background: #5d5d5d;
  color: #eee;
  font: bold 12px/16px "Liberation Sans", sans-serif;
  span { flex: 1; text-align: left; }
`

const Spacer = styled.div`
  flex: 1;
`

const Shelf = styled.section`
  display: flex;
  height: 68px;
  padding-top: 2px;
  border-bottom: 2px solid #383838;
`

const ShelfSide = styled.div`
  display: flex;
  flex-direction: column;
  justify-content: space-between;
  align-items: center;
  width: 20px;
  height: 61px;
  padding: 11px 0 8px;
  background: #373737;
`

const Bars = styled.i`
  display: block;
  width: 10px;
  height: 5px;
  background: linear-gradient(#b0b0b0 2px, transparent 2px, transparent 3px, #b0b0b0 3px);
`

const ShelfMain = styled.div`
  flex: 1;
  padding: 0 5px 0 4px;
  min-width: 0;
`

const ShelfTabs = styled.div`
  display: flex;
  gap: 3px;
  height: 19px;
  padding-top: 1px;
  background: #373737;
`

const ShelfTab = styled.button`
  padding: 0 10px;
  border: 1px solid ${(p) => (p.$on ? '#444' : '#303030')};
  border-bottom: 0;
  background: ${(p) => (p.$on ? '#444' : '#3a3a3a')};
  color: ${(p) => (p.$on ? '#eee' : '#999')};
`

const ShelfRow = styled.div`
  display: flex;
  align-items: center;
  height: 40px;
  padding: 0 3px 0 4px;
`

const ShelfButton = styled.button`
  flex: none;
  width: 34px;
  padding: 0 3px;
`

const ShelfSep = styled.i`
  width: 2px;
  height: 34px;
  margin: 0 5px;
  background: #8e8e8e;
`

const ShelfScroll = styled.div`
  display: flex;
  flex-direction: column;
  align-items: center;
  justify-content: space-between;
  width: 12px;
  height: 34px;
  padding: 3px 0;
  background: #373737;
  b { width: 10px; height: 10px; border-radius: 5px; background: #5d5d5d; }
`

const Body = styled.main`
  display: flex;
  flex: 1;
  min-height: 0;
  border-bottom: 2px solid #383838;
`

const Outliner = styled.aside`
  display: flex;
  flex-direction: column;
  width: 265px;
  border-right: 2px solid #383838;
`

const TabStrip = styled.div`
  display: flex;
  gap: ${(p) => (p.$low ? 1 : 3)}px;
  height: ${(p) => (p.$low ? 18 : 20)}px;
  padding: ${(p) => (p.$low ? '2px 0 0' : '3px 1px 0')};
  background: #373737;
`

const Tab = styled.button`
  padding: 0 10px;
  background: ${(p) => (p.$on ? '#444' : '#373737')};
  color: ${(p) => (p.$on ? '#eee' : '#888')};
  border: 1px solid ${(p) => (p.$on ? '#444' : '#303030')};
  border-bottom: 0;
  line-height: 14px;
`

const PanelMenu = styled.div`
  display: flex;
  align-items: center;
  gap: 15px;
  height: 21px;
  padding-left: 11px;
  ${(p) => p.$view && css`gap: 16px; height: 19px; padding: 0 0 2px 8px;`}
  ${(p) => p.$right && css`height: 22px; padding-left: 8px;`}
  ${(p) => p.$layer && css`padding-left: 9px;`}
`

const SearchRow = styled.div`
  display: flex;
  align-items: center;
  gap: 6px;
  height: 25px;
  padding: 1px 4px 0 8px;
  label { display: flex; align-items: center; flex: 1; height: 18px; padding: 0 4px; background: #2b2b2b; }
  input { flex: 1; min-width: 0; }
  input::placeholder { color: #8a8a8a; opacity: 1; }
`

const TreeArea = styled.div`
  display: flex;
  flex: 1;
  margin: 0 3px 0 4px;
  background: #373737;
`

const Tree = styled.ul`
  flex: 1;
  margin: 0;
  padding: 0 0 0 20px;
  list-style: none;
  li { display: flex; align-items: center; height: 20px; }
  li > button { width: 15px; }
  li > svg { margin-right: 3px; }
`

const Dim = styled.span`
  color: #6f6f6f;
`

const TreeGap = styled.i`
  width: 15px;
`

const Thumb = styled.div`
  flex: 1;
  align-self: stretch;
  border-radius: 4px;
  background: #5d5d5d;
  ${(p) => p.$part && css`flex: 0 0 64%; margin-right: auto;`}
`

const VScroll = styled.div`
  display: flex;
  flex-direction: column;
  align-items: center;
  gap: 4px;
  width: 10px;
  padding: 3px 0 5px;
`

const HScroll = styled.div`
  display: flex;
  align-items: center;
  gap: 5px;
  height: 11px;
  margin: 0 3px 0 4px;
  padding: 0 15px 0 3px;
  background: #373737;
  ${(p) => p.$layer && css`margin: 0 3px 3px; padding-right: 3px;`}
`

const DotLine = styled.div`
  width: 86px;
  height: ${(p) => (p.$wide ? 12 : 9)}px;
  margin: 0 auto;
  background: repeating-linear-gradient(to right, #777 0 1px, transparent 1px 3px) 0 ${(p) => (p.$wide ? 3 : 2)}px / 100% 1px no-repeat;
`

const Toolbox = styled.aside`
  display: flex;
  flex-direction: column;
  align-items: center;
  gap: 1px;
  width: 48px;
  padding: 4px 0;
  border-right: 2px solid #383838;
`

const DotGrip = styled.div`
  width: 38px;
  height: 5px;
  margin-bottom: 3px;
  ${dots}
`

const BigTool = styled.button`
  display: flex;
  align-items: center;
  justify-content: center;
  width: 36px;
  height: 36px;
  background: ${(p) => (p.$on ? '#5285a6' : 'none')};
`

const ToolRule = styled.i`
  width: 36px;
  height: 2px;
  margin: 78px 0 4px;
  background: #8e8e8e;
`

const Viewport = styled.section`
  display: flex;
  flex-direction: column;
  flex: 1;
  min-width: 0;
  margin: 4px 3px 2px 2px;
  border: 1px solid #858585;
`

const PanelBar = styled.div`
  display: flex;
  align-items: center;
  height: 19px;
  ${SepCell} i { height: 16px; }
`

const MiniInput = styled.input`
  width: 38px;
  height: 15px;
  padding-left: 5px;
  background: #2b2b2b;
`

const Scene = styled.div`
  position: relative;
  flex: 1;
  background:
    linear-gradient(#404040, #404040) 50% 0 / 2px 100% no-repeat,
    linear-gradient(#404040, #404040) 0 50% / 100% 2px no-repeat,
    #5c5c5c;
`

const AxisGizmo = styled.div`
  position: absolute;
  left: 17px;
  bottom: 7px;
`

const CameraName = styled.div`
  position: absolute;
  left: 0;
  right: 14px;
  bottom: 5px;
  text-align: center;
  color: #fff;
  font: bold 10px/14px "Liberation Sans", sans-serif;
`

const RightPanel = styled.aside`
  display: flex;
  flex-direction: column;
  width: 266px;
  padding: 0 3px 4px 4px;
  border-left: 2px solid #383838;
`

const ChannelIcons = styled.div`
  display: flex;
  justify-content: flex-end;
  height: 23px;
  padding: 3px 0 0;
`

const DarkBox = styled.div`
  flex: ${(p) => p.$grow || 1};
  background: #2b2b2b;
  ${(p) => p.$inner && css`margin: 0 3px;`}
`

const LayerFrame = styled.div`
  display: flex;
  flex-direction: column;
  flex: 325;
  border: 1px solid #363636;
`

const LayerIcons = styled.div`
  display: flex;
  justify-content: flex-end;
  height: 26px;
  padding-right: 4px;
`

const SideTabs = styled.div`
  display: flex;
  flex-direction: column;
  width: 17px;
  padding-top: 1px;
  background: #373737;
`

const SideTab = styled.button`
  height: ${(p) => p.$h}px;
  writing-mode: vertical-rl;
  text-align: left;
  padding: 12px 0 0;
  line-height: 16px;
  background: ${(p) => (p.$on ? '#444' : '#373737')};
  color: ${(p) => (p.$on ? '#eee' : '#888')};
  border-bottom: 2px solid #2f2f2f;
`

const TimeRow = styled.div`
  display: flex;
  align-items: center;
  height: 38px;
  padding-right: 10px;
  border-bottom: 2px solid #383838;
`

const Track = styled.div`
  display: flex;
  flex: 1;
  height: 28px;
  background: #2b2b2b;
`

const Now = styled.div`
  width: 11px;
  height: 28px;
  margin-left: 8px;
  padding: 12px 0 0 1px;
  background: #505050;
  color: #fff;
`

const Ticks = styled.div`
  display: flex;
  justify-content: space-between;
  flex: 1;
  margin: 0 21px 0 42px;
`

const Tick = styled.div`
  display: flex;
  flex-direction: column;
  justify-content: space-between;
  width: 2px;
  color: #808080;
  span { margin-left: 2px; line-height: 12px; }
  i { height: 15px; background: #808080; }
`

const FrameInput = styled.input`
  width: 88px;
  height: 18px;
  margin: 2px 6px 0;
  padding-left: 5px;
  background: #2b2b2b;
`

const Playback = styled.div`
  display: flex;
`

const RangeRow = styled.div`
  display: flex;
  align-items: center;
  height: 38px;
  padding-right: 5px;
  border-bottom: 2px solid #383838;
`

const RangeInput = styled.input`
  width: 88px;
  height: 25px;
  margin-right: 8px;
  padding-left: 5px;
  background: #2b2b2b;
  border-radius: 2px;
`

const RangeTrack = styled.div`
  flex: 1;
  height: 25px;
  margin-right: 8px;
  padding: 2px 5px;
  background: #373737;
`

const RangeBar = styled.div`
  display: flex;
  align-items: center;
  gap: 4px;
  width: 61%;
  height: 20px;
  padding: 0 2px 0 4px;
  background: #5d5d5d;
  border-radius: 3px;
  b { width: 15px; height: 14px; border-radius: 4px; background: #929292; }
`

const Tail = styled.div`
  display: flex;
  align-items: center;
  margin-left: -8px;
`

const CommandRow = styled.div`
  display: flex;
  align-items: center;
  height: 33px;
  padding-right: 2px;
  border-bottom: 2px solid #383838;
  label { width: 45px; padding-left: 10px; }
`

const CommandInput = styled.input`
  flex: 667;
  height: 22px;
  background: #2b2b2b;
`

const ErrorBox = styled.output`
  flex: 1154;
  height: 24px;
  padding-left: 7px;
  line-height: 25px;
  background: #ff5a5a;
  color: #5c2a2a;
`

const HelpRow = styled.div`
  display: flex;
  align-items: center;
  height: 25px;
  > span { margin-left: 13px; font-size: 10px; }
`

const Progress = styled.div`
  width: 130px;
  height: 13px;
  border: 2px solid #2b2b2b;
  border-radius: 3px;
  background: #5285a6;
  color: #23323d;
  text-align: center;
  line-height: 11px;
`

const Taskbar = styled.footer`
  display: flex;
  height: 40px;
  background: #060c14;
  color: #fff;
`

const TaskButton = styled.button`
  display: flex;
  align-items: center;
  justify-content: center;
  width: ${(p) => p.$w || 48}px;
  height: 40px;
  background: ${(p) => (p.$run ? 'linear-gradient(#76b9ed, #76b9ed) 50% 100% / 40px 2px no-repeat' : 'none')};
`

const TaskSearch = styled.label`
  display: flex;
  align-items: center;
  gap: 9px;
  width: 344px;
  padding: 0 15px 0 9px;
  background: #f1f1f1;
  color: #222;
  font-size: 14px;
  input { flex: 1; min-width: 0; }
  input::placeholder { color: #333; opacity: 1; }
`

const Tray = styled.div`
  display: flex;
  align-items: center;
  gap: 9px;
  padding-right: 4px;
`

const Desk = styled.span`
  line-height: 20px;
`

const Chevrons = styled.span`
  align-self: flex-start;
  margin-right: 14px;
  font-size: 15px;
  line-height: 16px;
`

const People = styled.span`
  margin-right: 11px;
`

const Clock = styled.div`
  display: flex;
  flex-direction: column;
  align-items: center;
  width: 62px;
  line-height: 18px;
`

const Notify = styled.button`
  position: relative;
  width: 43px;
  height: 40px;
  padding: 0 0 0 7px;
  border-right: 1px solid #555;
`

const Badge = styled.span`
  position: absolute;
  left: 15px;
  top: 19px;
  width: 16px;
  height: 16px;
  border: 1px solid #777;
  border-radius: 8px;
  background: #222;
  font-size: 11px;
  line-height: 14px;
`
